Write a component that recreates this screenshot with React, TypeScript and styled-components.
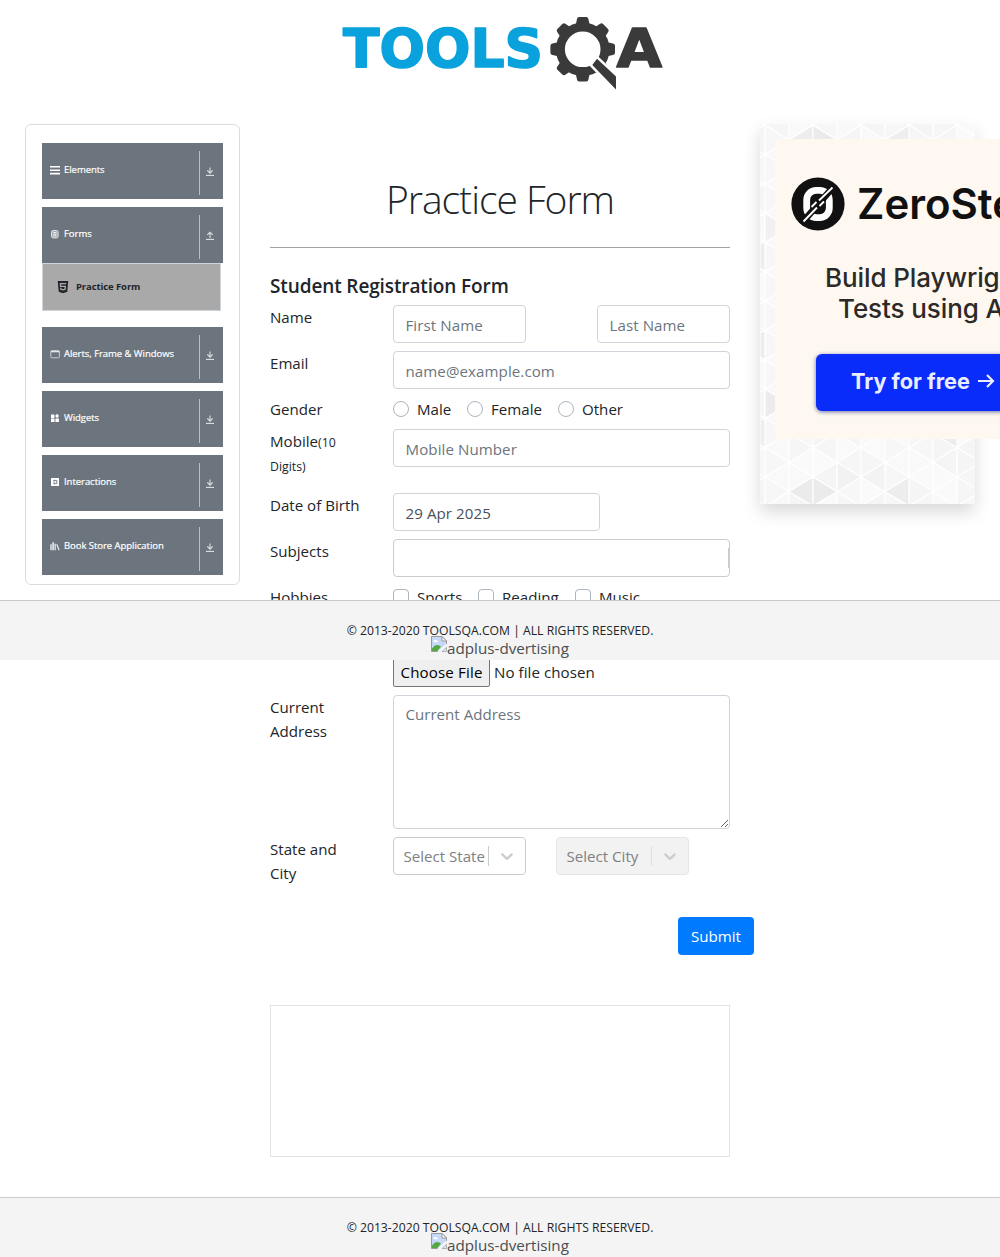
import React from 'react';
import styled, { createGlobalStyle } from 'styled-components';
import { FaHtml5 } from 'react-icons/fa';

const GlobalStyle = createGlobalStyle`
  *, *::before, *::after { box-sizing: border-box; }
  body {
    margin: 0;
    background: #fff;
    color: #212529;
    font-family: "Open Sans", "Noto Sans", sans-serif;
    font-size: 15.1px;
    line-height: 24px;
    overflow-x: hidden;
  }
`;

const Page = styled.div`
  position: relative;
  width: 1000px;
  height: 1257px;
  overflow: hidden;
  display: flex;
  flex-direction: column;
`;

const Header = styled.header`
  height: 124px;
  padding: 10px 0 0 340px;
`;

const Body = styled.main`
  display: flex;
  align-items: flex-start;
  padding: 0 25px;
  gap: 30px;
  height: 1073px;
`;

/* ---------- sidebar ---------- */

const Sidebar = styled.nav`
  flex: none;
  width: 215px;
  height: 461px;
  border: 1px solid #dcdcdd;
  border-radius: 6px;
  padding: 18px 16px;
  display: flex;
  flex-direction: column;
  gap: 8px;
`;

const Group = styled.div<{ $open?: boolean }>`
  margin-bottom: ${(p) => (p.$open ? 8 : 0)}px;
`;

const GroupHead = styled.div`
  height: 56px;
  width: 181px;
  padding: 8px 7px 4px 8px;
  background: #6c757d;
  color: #fff;
  display: flex;
  justify-content: space-between;
`;

const GroupLabel = styled.div`
  display: flex;
  align-items: center;
  gap: 4px;
  height: 37px;
  font-size: 9.5px;
  font-weight: 500;
  letter-spacing: -0.04px;
  -webkit-text-stroke: 0.2px #fff;
  white-space: nowrap;
`;

const GroupToggle = styled.div`
  width: 17px;
  height: 44px;
  padding: 0 0 3px 4px;
  border-left: 1px solid #b9bec2;
  display: flex;
  align-items: center;
  justify-content: center;
`;

const SubItem = styled.div`
  width: 179px;
  height: 48px;
  padding-left: 13px;
  border: 1px solid #ced4da;
  background: #a9a9a9;
  display: flex;
  align-items: center;
  gap: 6px;
  font-size: 9.5px;
  font-weight: 700;
  letter-spacing: -0.1px;
  color: #212529;
`;

/* ---------- form ---------- */

const Main = styled.section`
  flex: none;
  width: 460px;
`;

const Title = styled.h1`
  margin: 48px 0 0;
  height: 76px;
  padding-top: 3px;
  border-bottom: 1px solid #a3a3a3;
  font-size: 39px;
  font-weight: 300;
  letter-spacing: -1.02px;
  line-height: 48px;
  text-align: center;
`;

const FormTitle = styled.h5`
  margin: 26px 0 7px;
  font-size: 19px;
  font-weight: 600;
  letter-spacing: -0.12px;
  line-height: 24px;
`;

const Row = styled.div<{ $h?: number }>`
  display: flex;
  gap: 30px;
  height: ${(p) => p.$h ?? 38}px;
  margin-bottom: 8px;
`;

const Label = styled.label`
  flex: none;
  width: 93px;
`;

const Small = styled.small`
  font-size: 12.3px;
  line-height: 1;
`;

const Field = styled.input<{ $w: number }>`
  width: ${(p) => p.$w}px;
  height: 38px;
  padding: 3px 11.5px 1px;
  border: 1px solid #ced4da;
  border-radius: 4px;
  font: inherit;
  color: #495057;
  letter-spacing: 0.08px;
  outline: none;
  &::placeholder { color: #6c757d; opacity: 1; }
`;

const Pair = styled.div<{ $gap: number }>`
  display: flex;
  gap: ${(p) => p.$gap}px;
`;

const Options = styled.div`
  display: flex;
`;

const Option = styled.label<{ $w: number }>`
  display: flex;
  width: ${(p) => p.$w}px;
  gap: 8px;
  white-space: nowrap;
`;

const Mark = styled.span<{ $round?: boolean }>`
  flex: none;
  width: 16px;
  height: 16px;
  margin-top: 4px;
  border: 1px solid #adb5bd;
  border-radius: ${(p) => (p.$round ? '50%' : '4px')};
  background: #fff;
`;

const Subjects = styled.div`
  width: 337px;
  height: 38px;
  padding: 8px 0;
  border: 1px solid #ccc;
  border-radius: 4px;
  display: flex;
  justify-content: flex-end;
`;

const Separator = styled.span<{ $light?: boolean }>`
  flex: none;
  width: 1px;
  height: 20px;
  background: ${(p) => (p.$light ? '#e0e0e0' : '#ccc')};
`;

const FileRow = styled.div`
  margin: 48px 0 8px 123px;
  display: flex;
  align-items: center;
  gap: 4px;
  height: 30px;
  letter-spacing: 0.06px;
`;

const FileButton = styled.button`
  width: 97px;
  height: 30px;
  padding: 0;
  border: 1px solid #767676;
  border-radius: 2px;
  background: #efefef;
  color: #000;
  font: inherit;
  letter-spacing: 0.15px;
`;

const TextArea = styled.textarea`
  width: 337px;
  height: 134px;
  padding: 6px 11.5px;
  border: 1px solid #ced4da;
  border-radius: 4px;
  font: inherit;
  outline: none;
  resize: vertical;
  &::placeholder { color: #6c757d; opacity: 1; }
`;

const Select = styled.div<{ $disabled?: boolean }>`
  width: 133px;
  height: 38px;
  padding: 0 8px 0 9.5px;
  border: 1px solid ${(p) => (p.$disabled ? '#e6e6e6' : '#ccc')};
  border-radius: 4px;
  background: ${(p) => (p.$disabled ? '#f2f2f2' : '#fff')};
  color: #808080;
  display: flex;
  align-items: center;
`;

const SelectText = styled.span`
  flex: 1;
  white-space: nowrap;
`;

const Submit = styled.button`
  display: block;
  margin: 42px 0 0 408px;
  width: 76px;
  height: 38px;
  padding: 0;
  border: 0;
  border-radius: 4px;
  background: #007bff;
  color: #fff;
  font: inherit;
`;

const AdSlot = styled.div`
  width: 460px;
  height: 152px;
  margin-top: 50px;
  border: 1px solid #e3e3e3;
`;

/* ---------- advert ---------- */

const AdCard = styled.aside`
  position: relative;
  flex: none;
  width: 215px;
  height: 380px;
  box-shadow: 0 8px 16px rgba(0, 0, 0, 0.15);
`;

const AdBanner = styled.div`
  position: absolute;
  left: 15px;
  top: 15px;
  width: 300px;
  height: 300px;
  background: #fef8f1;
  font-family: Inter, sans-serif;
  color: #2b2a28;
`;

const Brand = styled.div`
  display: flex;
  align-items: center;
  gap: 12px;
  padding: 38px 0 0 16px;
  font-size: 42px;
  line-height: 54px;
  font-weight: 600;
  color: #111;
`;

const Pitch = styled.p`
  margin: 31px 0 0 -1px;
  font-size: 26px;
  font-weight: 500;
  line-height: 31px;
  letter-spacing: -0.1px;
  text-align: center;
  white-space: nowrap;
`;

const Cta = styled.div`
  display: flex;
  align-items: center;
  gap: 8px;
  width: 218px;
  height: 57px;
  margin: 30px 0 0 41px;
  padding: 0 0 3px 35px;
  border-radius: 6px;
  background: #0a2cfb;
  box-shadow: 0 1px 4px rgba(10, 20, 120, 0.6);
  color: #e9edff;
  font-size: 21.7px;
  font-weight: 700;
`;

/* ---------- footer ---------- */

const FooterBar = styled.footer<{ $pinned?: boolean }>`
  ${(p) => (p.$pinned ? 'position: absolute; left: 0; top: 600px;' : '')}
  width: 1000px;
  height: 60px;
  border-top: 1px solid #c9cacb;
  background: #f4f4f4;
  padding-top: 22px;
  display: flex;
  flex-direction: column;
  align-items: center;
  font-size: 12.2px;
  line-height: 16px;
`;

const BrokenImage = styled.div`
  display: flex;
  align-items: flex-start;
  margin-top: -3px;
  font-size: 15.2px;
  line-height: 24px;
  color: #4b4e51;
`;

function Logo() {
  const teeth = [0, 45, 90, 135, 180, 225, 270, 315];
  return (
    <svg width="326" height="84" viewBox="340 10 326 84">
      <g fontFamily="DejaVu Sans, sans-serif" fontWeight="700" fontSize="54" strokeWidth="1.6" strokeLinejoin="round">
        <text x="343" y="66.5" fill="#0aa2dd" stroke="#0aa2dd" textLength="200" lengthAdjust="spacingAndGlyphs">TOOLS</text>
        <text x="616.5" y="66.5" fill="#3a3a3a" stroke="#3a3a3a" textLength="45.5" lengthAdjust="spacingAndGlyphs">A</text>
      </g>
      <g fill="#3a3a3a">
        {teeth.map((a) => (
          <path key={a} transform={`rotate(${a} 582.7 49.3)`} d="M575.5 26 L577 19 Q577.2 17 579.2 17 H586.2 Q588.2 17 588.4 19 L589.900 26Z" />
        ))}
        <circle cx="582.7" cy="49.3" r="22.3" fill="none" stroke="#3a3a3a" strokeWidth="9" />
      </g>
      <path d="M592.3 65 L597 58.8 L616 76.5 V89.500Z" fill="#fff" stroke="#fff" strokeWidth="5" />
      <path d="M592.3 65 L597 58.8 L616 76.5 V89.5Z" fill="#3a3a3a" />
    </svg>
  );
}

const icons: Record<string, React.ReactNode> = {
  bars: <path d="M0 1h10v1.6H0zM0 4.4h10V6H0zM0 7.8h10v1.6H0z" />,
  form: (
    <>
      <rect x="1.5" y="1.5" width="6.6" height="7.4" rx="1.6" fill="#ffffff66" stroke="#e1e3e5" strokeWidth="1" />
      <path d="M3.2 3.6h3.2M3.2 5.2h3.2M3.2 6.8h3.2" stroke="#fff" strokeWidth=".8" />
    </>
  ),
  window: (
    <>
      <rect x=".8" y="1.6" width="8.6" height="7.2" rx="1" fill="none" stroke="#c9cdd0" strokeWidth="1" />
      <path d="M1 2.6h8.4" stroke="#e2e4e6" strokeWidth="1.4" />
    </>
  ),
  widgets: <path d="M1 1.4h3.5v3.5H1zM1 5.6h3.5v3.5H1zM5.4 5.6h3.5v3.5H5.4zM7.1 .8l2 2.2-2 2.2-2-2.2z" />,
  interact: (
    <>
      <rect x="1" y="1" width="8" height="8" rx=".5" />
      <path d="M3.2 3.4h3.6v3.3H3.200" fill="none" stroke="#6c757d" strokeWidth=".9" />
      <path d="M3.2 5h2" fill="none" stroke="#6c757d" strokeWidth=".8" />
    </>
  ),
  books: (
    <path d="M.3 3.2h1.4v6H.3zM2.3 1.2h1.6v8H2.3zM4.5 2.8h1.3v6.4H4.5zM6.2 3.4l1.1-.3 2.3 6-1.1.4z" opacity=".85" />
  ),
};

function Icon({ name }: { name: string }) {
  return (
    <svg width="10" height="10" viewBox="0 0 10 10" fill="#fff">
      {icons[name]}
    </svg>
  );
}

function Toggle({ up }: { up?: boolean }) {
  return (
    <svg width="8" height="9" viewBox="0 0 8 9" fill="none" stroke="#dfe2e4" strokeWidth="1.1">
      <path d={up ? 'M4 7V1.2M1.3 3.9L4 1.2l2.7 2.7' : 'M4 .4v5.6M1.3 3.4L4 6.1l2.7-2.7'} />
      <path d="M0 8.4h8" />
    </svg>
  );
}

const ChevronSvg = styled.svg`
  flex: none;
  margin-left: 8px;
`;

function Chevron() {
  return (
    <ChevronSvg width="20" height="20" viewBox="0 0 20 20" fill="#ccc">
      <path d="M4.516 7.548c0.436-0.446 1.043-0.481 1.576 0l3.908 3.747 3.908-3.747c0.533-0.481 1.141-0.446 1.574 0 0.436 0.445 0.408 1.197 0 1.615-0.406 0.418-4.695 4.502-4.695 4.502-0.217 0.223-0.502 0.335-0.787 0.335s-0.57-0.112-0.789-0.335c0 0-4.287-4.084-4.695-4.502s-0.436-1.17 0-1.615z" />
    </ChevronSvg>
  );
}

const COL = 24;
const SIDE = 29.3;

function Triangles() {
  const out: React.ReactNode[] = [];
  const tones = ['#f7f7f7', '#fafafa', '#f6f6f6', '#f9f9f9', '#f5f5f5'];
  for (let c = -1; c < 9; c++) {
    for (let r = -1; r < 14; r++) {
      const x0 = 5 + c * COL;
      const x1 = x0 + COL;
      const even = (c & 1) === 0;
      const yl = 1.3 + r * SIDE + (even ? 0 : SIDE / 2);
      const yr = 1.3 + r * SIDE + (even ? SIDE / 2 : 0);
      const tone = (k: number) => tones[Math.abs((c * 7 + r * 5 + k * 3 + c * r) % 5)];
      const a = `${x0},${yl} ${x0},${yl + SIDE} ${x1},${even ? yr : yr + SIDE}`;
      const b = even
        ? `${x1},${yr} ${x1},${yr + SIDE} ${x0},${yl + SIDE}`
        : `${x1},${yr} ${x1},${yr + SIDE} ${x0},${yl}`;
      out.push(<polygon key={`a${c},${r}`} points={a} fill={tone(0)} />);
      out.push(<polygon key={`b${c},${r}`} points={b} fill={tone(1)} />);
    }
  }
  const accents: [string, string][] = [
    ['29,367.6 53,353 53,382', '#ebebeb'],
    ['77,367.6 53,353 53,382', '#ebebeb'],
    ['125,367.6 149,353 149,382', '#ededed'],
    ['77,338.3 77,367.6 101,353', '#f2f2f2'],
    ['101,353 125,338.3 125,367.6', '#f3f3f3'],
    ['29,16 53,1.3 53,30.6', '#ededed'],
    ['77,16 53,1.3 53,30.6', '#ebebeb'],
    ['125,16 149,1.3 149,30.6', '#eeeeee'],
    ['5,89.2 5,118.5 29,103.8', '#f1f1f1'],
    ['0,120 5,118.5 5,147.8 0,144', '#ededed'],
    ['0,209 5,206.4 5,235.7 0,233', '#ededed'],
    ['5,265 5,294.3 29,279.6', '#ececec'],
    ['0,296 5,294.3 5,323.6 0,321', '#eeeeee'],
    ['173,309 197,294.3 197,323.6', '#ededed'],
  ];
  return (
    <svg width="215" height="380" viewBox="0 0 215 380" display="block">
      <rect width="215" height="380" fill="#f8f8f8" />
      <g stroke="#fff" strokeWidth="1.1">
        {out}
        {accents.map(([p, f]) => (
          <polygon key={p} points={p} fill={f} />
        ))}
      </g>
    </svg>
  );
}

function ZeroMark() {
  return (
    <svg width="54" height="54" viewBox="-27 -27 54 54">
      <circle r="26.6" fill="#111" />
      <rect x="-11.3" y="-13.6" width="22.6" height="27.2" rx="9.500" fill="none" stroke="#fff" strokeWidth="6.8" />
      <path d="M-17 20L17-19" stroke="#111" strokeWidth="6.5" />
      <path d="M-14.5 17.500L-1 3.500M1-3.500L14.500-16.500M-6.500 3L-1.500-2M1.500 2L6-2.500" stroke="#fff" strokeWidth="1.9" />
    </svg>
  );
}

function Footer({ pinned }: { pinned?: boolean }) {
  return (
    <FooterBar $pinned={pinned}>
      <span>© 2013-2020 TOOLSQA.COM | ALL RIGHTS RESERVED.</span>
      <BrokenImage>
        <svg width="16" height="16" viewBox="0 0 16 16">
          <path d="M.5.5H11L15.5 5V9L8 15.5H.5Z" fill="#c5d8f7" stroke="#9a9a9a" />
          <path d="M11 .5V5H15.5Z" fill="#fff" stroke="#9a9a9a" />
          <path d="M2.5 5.5c0-2 2.5-2.4 3-1 1.5-.4 2 1.5.6 1.8H3Z" fill="#fff" />
          <path d="M1 15v-2.5C4 8.500 7 8 10 10.500L6.500 15Z" fill="#53a93f" />
          <path d="M7 16L16 8.300" stroke="#fff" strokeWidth="1.500" />
          <path d="M11 15.500H15.500V11.500Z" fill="#dfe8f5" stroke="#9a9a9a" strokeWidth=".7" />
        </svg>
        <span>adplus-dvertising</span>
      </BrokenImage>
    </FooterBar>
  );
}

function MenuGroup({ icon, label, open, children }: { icon: string; label: string; open?: boolean; children?: React.ReactNode }) {
  return (
    <Group $open={open}>
      <GroupHead>
        <GroupLabel>
          <Icon name={icon} />
          <span>{label}</span>
        </GroupLabel>
        <GroupToggle>
          <Toggle up={open} />
        </GroupToggle>
      </GroupHead>
      {children}
    </Group>
  );
}

export default function App() {
  return (
    <Page>
      <GlobalStyle />
      <Header>
        <Logo />
      </Header>
      <Body>
        <Sidebar>
          <MenuGroup icon="bars" label="Elements" />
          <MenuGroup icon="form" label="Forms" open>
            <SubItem>
              <FaHtml5 size={14} />
              <span>Practice Form</span>
            </SubItem>
          </MenuGroup>
          <MenuGroup icon="window" label="Alerts, Frame & Windows" />
          <MenuGroup icon="widgets" label="Widgets" />
          <MenuGroup icon="interact" label="Interactions" />
          <MenuGroup icon="books" label="Book Store Application" />
        </Sidebar>

        <Main>
          <Title>Practice Form</Title>
          <FormTitle>Student Registration Form</FormTitle>
          <Row>
            <Label>Name</Label>
            <Pair $gap={71}>
              <Field $w={133} placeholder="First Name" />
              <Field $w={133} placeholder="Last Name" />
            </Pair>
          </Row>
          <Row>
            <Label>Email</Label>
            <Field $w={337} placeholder="name@example.com" />
          </Row>
          <Row $h={24}>
            <Label>Gender</Label>
            <Options>
              <Option $w={74}><Mark $round />Male</Option>
              <Option $w={91}><Mark $round />Female</Option>
              <Option $w={70}><Mark $round />Other</Option>
            </Options>
          </Row>
          <Row $h={56}>
            <Label>Mobile<Small>(10 Digits)</Small></Label>
            <Field $w={337} placeholder="Mobile Number" />
          </Row>
          <Row>
            <Label>Date of Birth</Label>
            <Field $w={207} defaultValue="29 Apr 2025" />
          </Row>
          <Row>
            <Label>Subjects</Label>
            <Subjects><Separator /></Subjects>
          </Row>
          <Row $h={24}>
            <Label>Hobbies</Label>
            <Options>
              <Option $w={85}><Mark />Sports</Option>
              <Option $w={97}><Mark />Reading</Option>
              <Option $w={70}><Mark />Music</Option>
            </Options>
          </Row>
          <FileRow>
            <FileButton>Choose File</FileButton>
            <span>No file chosen</span>
          </FileRow>
          <Row $h={134}>
            <Label>Current Address</Label>
            <TextArea placeholder="Current Address" />
          </Row>
          <Row>
            <Label>State and City</Label>
            <Pair $gap={30}>
              <Select>
                <SelectText>Select State</SelectText>
                <Separator />
                <Chevron />
              </Select>
              <Select $disabled>
                <SelectText>Select City</SelectText>
                <Separator $light />
                <Chevron />
              </Select>
            </Pair>
          </Row>
          <Submit>Submit</Submit>
          <AdSlot />
        </Main>

        <AdCard>
          <Triangles />
          <AdBanner>
            <Brand>
              <ZeroMark />
              <span>ZeroStep</span>
            </Brand>
            <Pitch>
              Build Playwright
              <br />
              Tests using AI
            </Pitch>
            <Cta>
              Try for free
              <svg width="17" height="16" viewBox="0 0 17 16" fill="none" stroke="#e9edff" strokeWidth="2.2">
                <path d="M0 8h15M9 2l6 6-6 6" />
              </svg>
            </Cta>
          </AdBanner>
        </AdCard>
      </Body>
      <Footer />
      <Footer pinned />
    </Page>
  );
}
